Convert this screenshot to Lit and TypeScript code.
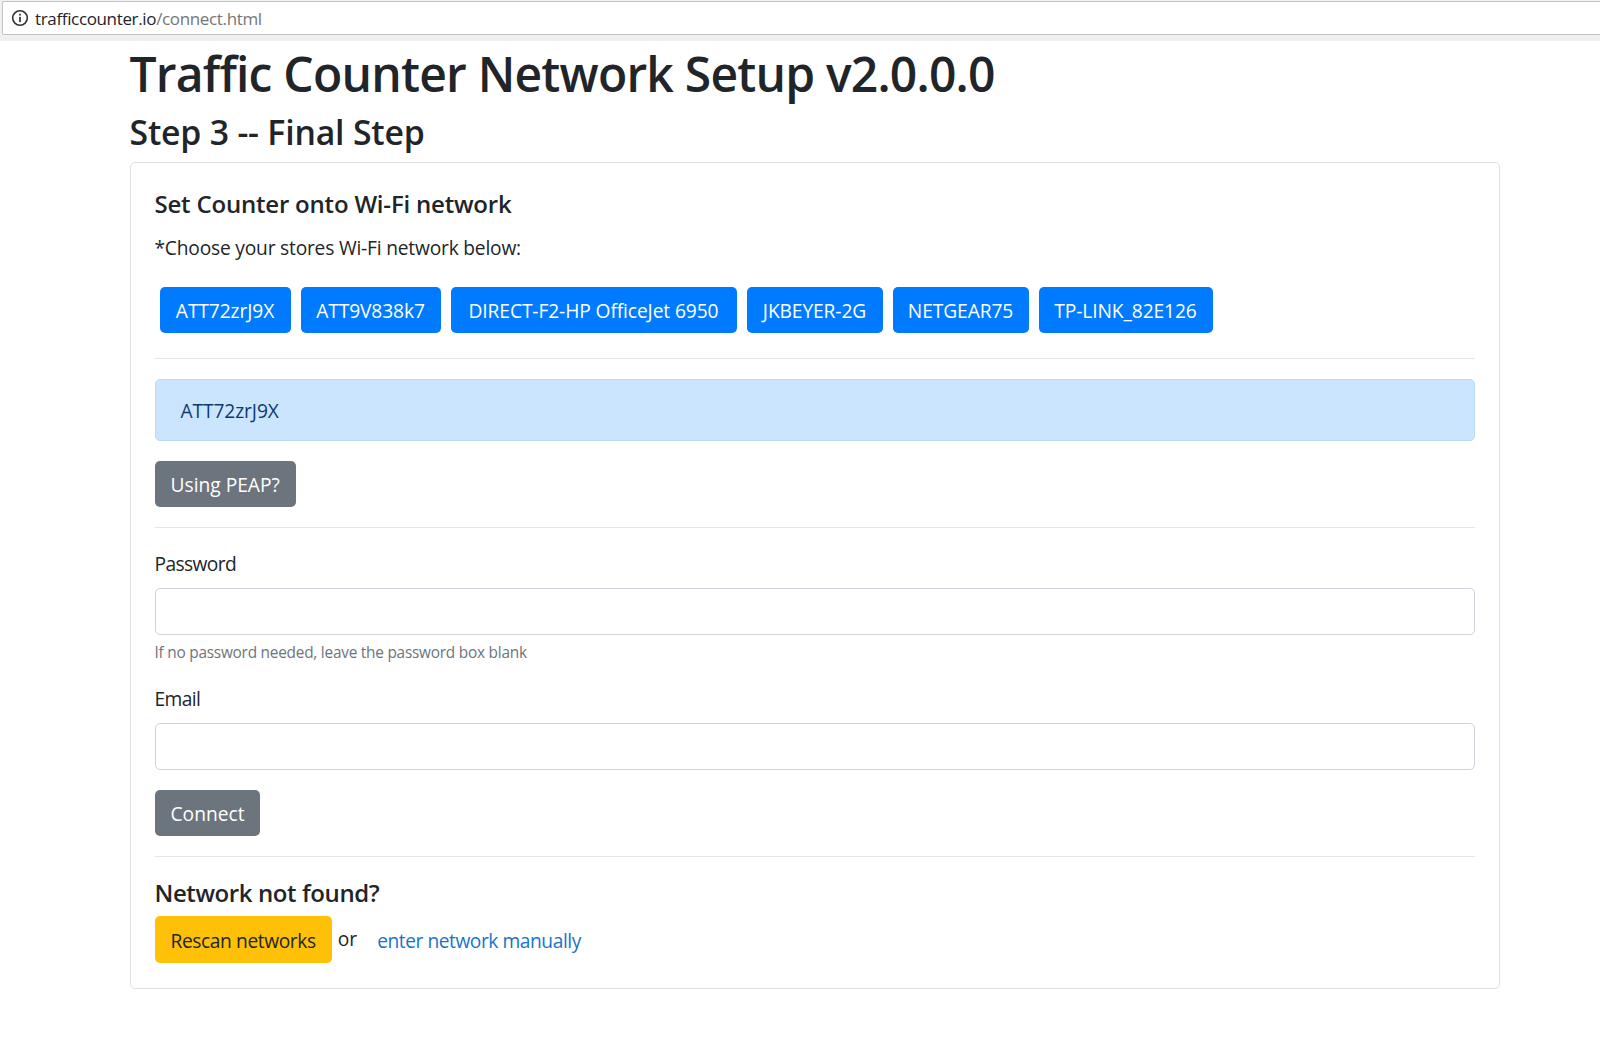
import { LitElement, html, css } from "lit";
import { customElement } from "lit/decorators.js";

const NETWORKS = [
  { name: "ATT72zrJ9X", width: 131 },
  { name: "ATT9V838k7", width: 140 },
  { name: "DIRECT-F2-HP OfficeJet 6950", width: 286 },
  { name: "JKBEYER-2G", width: 136 },
  { name: "NETGEAR75", width: 136 },
  { name: "TP-LINK_82E126", width: 174 },
];

@customElement("app-root")
export class AppRoot extends LitElement {
  static styles = css`
    :host { display: block; min-height: 1058px; background: #fff; color: #212529; font-family: "Open Sans", "Noto Sans", sans-serif; font-size: 19.2px; line-height: 30px; overflow: hidden; }
    * { box-sizing: border-box; }
    .chrome { height: 41px; background: #f0f0f0; padding: 1px 0 6px 2px; }
    .url { height: 34px; background: #fff; border: 1px solid #c4c4c4; border-right: 0; border-radius: 2px 0 0 2px; display: flex; align-items: center; gap: 6px; padding-left: 8px; font-size: 17px; letter-spacing: -0.35px; line-height: 1; }
    .url svg { width: 18px; height: 18px; flex: none; }
    .url .dim { color: #757575; }
    main { width: 1370px; margin-left: 129.5px; }
    h1 { font-size: 48px; font-weight: 600; line-height: 59px; margin: 3px 0 0; letter-spacing: -0.78px; }
    h3 { font-size: 33.8px; font-weight: 600; line-height: 41.5px; margin: 9px 0 8px; letter-spacing: -0.2px; }
    .card { border: 1px solid #dfdfdf; border-radius: 5px; padding: 24px; height: 827px; }
    h5 { font-size: 24px; font-weight: 600; line-height: 29.6px; margin: 2px 0 0; letter-spacing: -0.2px; }
    p { margin: 15px 0 0; letter-spacing: -0.2px; }
    .nets { display: flex; gap: 10px; padding-left: 5px; margin-top: 24px; }
    .btn { display: inline-flex; align-items: center; justify-content: center; height: 46px; padding: 2px 16px 0; border: 0; border-radius: 5px; font: inherit; letter-spacing: -0.1px; white-space: nowrap; color: #fff; }
    .primary { background: #007bff; }
    .secondary { background: #6c757d; letter-spacing: 0; }
    .warning { background: #ffc107; color: #212529; letter-spacing: -0.4px; height: 47px; padding-top: 3px; }
    hr { border: 0; border-top: 1px solid #e6e6e6; margin: 25px 0 20px; }
    hr.tight { margin: 20px 0 21px; }
    .alert { height: 62px; background: #cce5ff; border: 1px solid #b8daff; border-radius: 5px; color: #0c3a70; padding: 2px 25px 0; display: flex; align-items: center; letter-spacing: -0.1px; margin-bottom: 20px; }
    label { display: block; letter-spacing: -0.6px; height: 30px; margin-bottom: 9px; }
    .input { height: 47px; border: 1px solid #ced4da; border-radius: 5px; background: #fff; }
    small { display: block; font-size: 15.4px; color: #6c757d; margin-top: 6px; letter-spacing: -0.24px; line-height: 24px; }
    .group { margin-bottom: 20px; }
    .group.first { margin-bottom: 19px; }
    h4 { font-size: 24px; font-weight: 600; line-height: 29.6px; margin: 0 0 8px; letter-spacing: -0.4px; }
    .row { display: flex; align-items: flex-start; }
    .or { margin: 8px 0 0 6px; }
    a { color: #1a73c9; text-decoration: none; letter-spacing: -0.45px; margin: 10px 0 0 20px; }
  `;

  render() {
    return html`
      <div class="chrome">
        <div class="url">
          <svg viewBox="0 0 17 17" fill="none"><circle cx="8.5" cy="8.5" r="6.9" stroke="#333" stroke-width="1.5"/><rect x="7.7" y="7.4" width="1.6" height="5" fill="#333"/><rect x="7.7" y="4.5" width="1.6" height="1.7" fill="#333"/></svg>
          <span>trafficcounter.io<span class="dim">/connect.html</span></span>
        </div>
      </div>
      <main>
        <h1>Traffic Counter Network Setup v2.0.0.0</h1>
        <h3>Step 3 -- Final Step</h3>
        <section class="card">
          <h5>Set Counter onto Wi-Fi network</h5>
          <p>*Choose your stores Wi-Fi network below:</p>
          <div class="nets">${NETWORKS.map((n) => html`<button class="btn primary" style="width:${n.width}px">${n.name}</button>`)}</div>
          <hr />
          <div class="alert">ATT72zrJ9X</div>
          <button class="btn secondary">Using PEAP?</button>
          <hr class="tight" />
          <div class="group first">
            <label>Password</label>
            <div class="input"></div>
            <small>If no password needed, leave the password box blank</small>
          </div>
          <div class="group">
            <label>Email</label>
            <div class="input"></div>
          </div>
          <button class="btn secondary">Connect</button>
          <hr class="tight" />
          <h4>Network not found?</h4>
          <div class="row">
            <button class="btn warning">Rescan networks</button>
            <span class="or">or</span>
            <a href="#">enter network manually</a>
          </div>
        </section>
      </main>
    `;
  }
}
